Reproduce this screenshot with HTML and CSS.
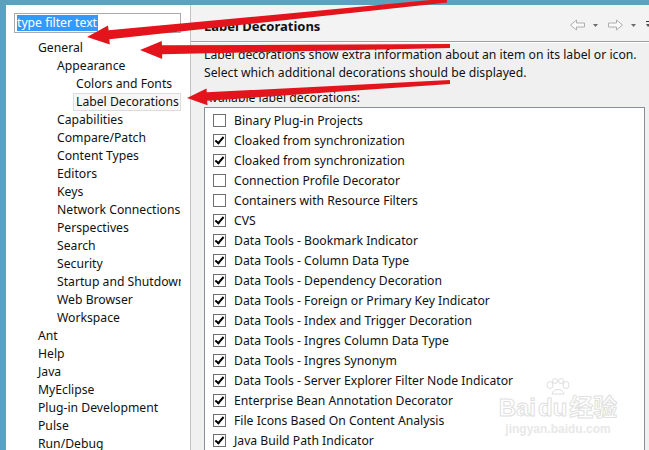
FILE: index.html
```html
<!DOCTYPE html>
<html>
<head>
<meta charset="utf-8">
<link rel="stylesheet" href="styles.css">
</head>
<body>
<div class="app">
  <aside class="nav">
    <div class="filter"><span class="sel">type filter text</span></div>
    <ul class="tree">
      <li class="l1">General</li>
      <li class="l2">Appearance</li>
      <li class="l3">Colors and Fonts</li>
      <li class="l3 current">Label Decorations</li>
      <li class="l2">Capabilities</li>
      <li class="l2">Compare/Patch</li>
      <li class="l2">Content Types</li>
      <li class="l2">Editors</li>
      <li class="l2">Keys</li>
      <li class="l2">Network Connections</li>
      <li class="l2">Perspectives</li>
      <li class="l2">Search</li>
      <li class="l2">Security</li>
      <li class="l2">Startup and Shutdown</li>
      <li class="l2">Web Browser</li>
      <li class="l2">Workspace</li>
      <li class="l1">Ant</li>
      <li class="l1">Help</li>
      <li class="l1">Java</li>
      <li class="l1">MyEclipse</li>
      <li class="l1">Plug-in Development</li>
      <li class="l1">Pulse</li>
      <li class="l1">Run/Debug</li>
    </ul>
  </aside>
  <main class="page">
    <header class="page-head">
      <h1 class="title">Label Decorations</h1>
      <svg class="tools" width="81" height="14" viewBox="0 0 81 14">
        <polygon points="2.5,7 8.5,2 8.5,5 16.5,5 16.5,9 8.5,9 8.5,12" fill="#fafafa" stroke="#aeaeae"/>
        <polygon points="25,6 30,6 27.5,9" fill="#6a6a6a"/>
        <polygon points="54.5,7 48.5,2 48.5,5 40.5,5 40.5,9 48.5,9 48.5,12" fill="#fafafa" stroke="#aeaeae"/>
        <polygon points="63,6 68,6 65.5,9" fill="#6a6a6a"/>
        <rect x="78" y="3" width="3" height="1" fill="#333"/>
        <polygon points="78,6 81,6 81,8 80,9" fill="#555"/>
      </svg>
    </header>
    <div class="page-body">
      <p class="desc">Label decorations show extra information about an item on its label or icon.<br>Select which additional decorations should be displayed.</p>
      <p class="avail">Available label decorations:</p>
      <ul class="list">
        <li><span class="cb"></span>Binary Plug-in Projects</li>
        <li><span class="cb on"></span>Cloaked from synchronization</li>
        <li><span class="cb on"></span>Cloaked from synchronization</li>
        <li><span class="cb"></span>Connection Profile Decorator</li>
        <li><span class="cb"></span>Containers with Resource Filters</li>
        <li><span class="cb on"></span>CVS</li>
        <li><span class="cb on"></span>Data Tools - Bookmark Indicator</li>
        <li><span class="cb on"></span>Data Tools - Column Data Type</li>
        <li><span class="cb on"></span>Data Tools - Dependency Decoration</li>
        <li><span class="cb on"></span>Data Tools - Foreign or Primary Key Indicator</li>
        <li><span class="cb on"></span>Data Tools - Index and Trigger Decoration</li>
        <li><span class="cb on"></span>Data Tools - Ingres Column Data Type</li>
        <li><span class="cb on"></span>Data Tools - Ingres Synonym</li>
        <li><span class="cb on"></span>Data Tools - Server Explorer Filter Node Indicator</li>
        <li><span class="cb on"></span>Enterprise Bean Annotation Decorator</li>
        <li><span class="cb on"></span>File Icons Based On Content Analysis</li>
        <li><span class="cb on"></span>Java Build Path Indicator</li>
      </ul>
    </div>
  </main>
</div>

<div class="watermark">
  <svg class="paw" width="28" height="18" viewBox="0 0 28 18">
    <g fill="none" stroke="#dedede" stroke-width="1">
      <ellipse cx="6" cy="7" rx="3" ry="3.5"/>
      <ellipse cx="11" cy="3" rx="2.5" ry="2.5"/>
      <ellipse cx="17" cy="3" rx="2.5" ry="2.5"/>
      <ellipse cx="22" cy="7" rx="3" ry="3.5"/>
      <path d="M8 16 C9 10 19 10 20 16 Z"/>
    </g>
  </svg>
  <div class="wm-big">Bai<span class="wm-du">du</span>经验</div>
  <div class="wm-small">jingyan.baidu.com</div>
</div>

<svg class="arrows" width="649" height="450" viewBox="0 0 649 450">
  <g fill="#e3141c">
    <polygon points="87,37 109.8,44.5 109.4,39.3 447.2,2.5 446.8,-1.5 108.6,30.3 108,25.5"/>
    <polygon points="140,50 162.2,59 162.1,54.3 450,48 450,44 161.9,45.3 161.8,41"/>
    <polygon points="187,98 207.5,105.3 207.2,100.8 450.1,84 449.9,80 206.8,92.3 206.5,88.6"/>
  </g>
</svg>
</body>
</html>
```
FILE: styles.css
```css
html, body {
  margin: 0;
  padding: 0;
  height: 100%;
  overflow: hidden;
}

body {
  position: relative;
  background: #5ca1bd;
  font-family: "Noto Sans", "Liberation Sans", sans-serif;
  font-size: 12.2px;
  color: #000;
}

.app {
  display: flex;
  height: 445px;
  margin: 5px 0 0 6px;
}

.nav {
  width: 185px;
  box-sizing: border-box;
  background: #fff;
  border-right: 1px solid #c4c4c4;
  padding: 8px 9px 0 8px;
  overflow: hidden;
  flex: none;
}

.filter {
  height: 20px;
  box-sizing: border-box;
  border: 1px solid #ababab;
  display: flex;
  align-items: center;
  padding-left: 2px;
}

.sel {
  background: #3399ff;
  color: #fff;
  line-height: 16px;
  padding: 0 1px 0 0;
}

.tree {
  list-style: none;
  margin: 6px 0 0;
  padding: 0;
  overflow: hidden;
}

.tree li {
  height: 18px;
  line-height: 18px;
  white-space: nowrap;
  color: #111;
}

.l1 { padding-left: 24px; }
.l2 { padding-left: 43px; }
.l3 { padding-left: 62px; }

.tree li.current {
  margin-left: 59px;
  padding-left: 2px;
  height: 16px;
  line-height: 16px;
  border: 1px solid #dcdcdc;
  background: #f7f7f7;
}

.page {
  flex: 1;
  min-width: 0;
  background: #f0f0f0;
  display: flex;
  flex-direction: column;
  overflow: hidden;
}

.page-head {
  height: 37px;
  box-sizing: border-box;
  flex: none;
  display: flex;
  align-items: center;
  justify-content: space-between;
  padding: 5px 0 0 13px;
  background: #f3f3f3;
  border-bottom: 1px solid #a0a0a0;
}

.title {
  margin: 0;
  font-size: 13px;
  font-weight: bold;
  color: #111;
}

.tools {
  display: block;
  flex: none;
  margin-top: -2px;
}

.page-body {
  padding: 3px 4px 0 13px;
  border-top: 1px solid #fff;
}

.desc {
  margin: 0;
  line-height: 18px;
  color: #111;
}

.avail {
  margin: 7px 0 0;
  line-height: 17px;
  color: #111;
}

.list {
  list-style: none;
  margin: 1px 0 0;
  padding: 2px 0 0 8px;
  background: #fff;
  border: 1px solid #8a8f96;
  height: 400px;
}

.list li {
  height: 20px;
  display: flex;
  align-items: center;
  white-space: nowrap;
  color: #111;
}

.cb {
  width: 13px;
  height: 13px;
  box-sizing: border-box;
  border: 1px solid #6f6f6f;
  background: #fff;
  margin-right: 8px;
  flex: none;
  position: relative;
}

.cb.on::after {
  content: "";
  position: absolute;
  left: 3px;
  top: 0px;
  width: 3px;
  height: 7px;
  border-right: 2px solid #000;
  border-bottom: 2px solid #000;
  transform: rotate(40deg);
}

.watermark {
  position: absolute;
  left: 498px;
  top: 378px;
  width: 120px;
  display: flex;
  flex-direction: column;
  align-items: center;
  pointer-events: none;
}

.paw {
  display: block;
}

.wm-big {
  font-family: "Liberation Sans", "Noto Sans CJK SC", sans-serif;
  font-size: 24px;
  font-weight: bold;
  line-height: 24px;
  color: transparent;
  -webkit-text-stroke: 1px #e0e0e0;
  white-space: nowrap;
}

.wm-du {
  margin: 0 2px;
}

.wm-small {
  font-family: "Liberation Sans", sans-serif;
  font-size: 12px;
  font-weight: bold;
  color: #e8e8e8;
  margin-top: 2px;
}

.arrows {
  position: absolute;
  left: 0;
  top: 0;
  pointer-events: none;
}
```
